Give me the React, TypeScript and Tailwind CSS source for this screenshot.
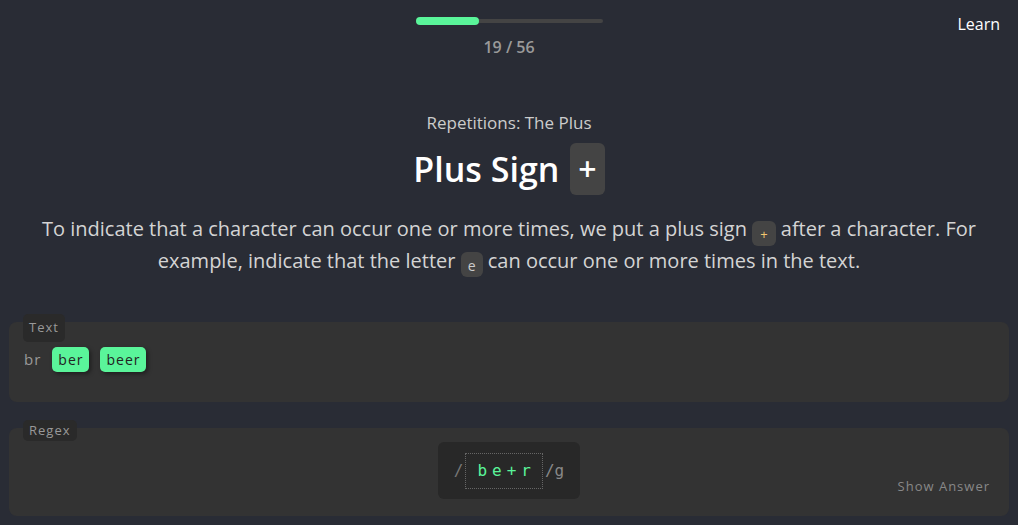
export default function App() {
  return (
    <div className="min-h-[525px] w-full bg-[#292c35] font-['Open_Sans',sans-serif] text-[#ddd]">
      {/* Header */}
      <div className="relative flex h-[70px] flex-col items-center pt-[19px]">
        <div className="h-[4px] w-[187px] rounded-full bg-[#444]">
          <div className="h-[8px] w-[63px] -translate-y-[2px] rounded-full bg-[#5af59a]" />
        </div>
        <div className="mt-[12px] text-[16px] font-semibold text-[#9a9a9a]">19 / 56</div>
        <div className="absolute right-[18px] top-[12px] text-[16px] text-white">Learn</div>
      </div>

      {/* Intro */}
      <div className="flex flex-col items-center pt-[41px] text-center">
        <div className="text-[17px] leading-[24px] text-[#ccc]">Repetitions: The Plus</div>
        <h1 className="mt-[8px] flex items-center gap-[11px] text-[34px] font-semibold leading-[52px] text-white">
          Plus Sign
          <span className="rounded-[6px] bg-[#444] px-[8px] text-[32px]">+</span>
        </h1>
        <p className="mt-[19px] max-w-[960px] px-[10px] text-[20px] leading-[30px] text-[#d4d4d4]">
          To indicate that a character can occur one or more times, we put a plus sign{" "}
          <code className="inline-block h-[25px] rounded-[6px] bg-[#444] px-[8px] align-[-3px] font-['Open_Sans',sans-serif] text-[13px] leading-[27px] text-[#f5c770]">+</code>{" "}
          after a character. For example, indicate that the letter{" "}
          <code className="inline-block h-[25px] rounded-[6px] bg-[#444] px-[7px] align-[-3px] font-['Open_Sans',sans-serif] text-[14px] leading-[28px] text-[#ccc]">e</code>{" "}
          can occur one or more times in the text.
        </p>
      </div>

      {/* Text panel */}
      <div className="mx-[9px] mt-[45px] rounded-[8px] bg-[#333]">
        <div className="relative h-[80px] px-[14px] pt-[25px]">
          <span className="absolute left-[14px] top-[-8px] flex h-[28px] items-center rounded-[5px] bg-[#2a2a2a] px-[6px] text-[13px] tracking-[1px] text-[#999]">
            Text
          </span>
          <div className="flex items-center gap-[11px] text-[14px] tracking-[1px]">
            <span className="pl-[1px] text-[15px] text-[#999]">br</span>
            <span className="rounded-[5px] bg-[#5af59a] px-[6px] py-[2px] text-[#222] shadow-[2px_2px_4px_rgba(0,0,0,0.4)]">ber</span>
            <span className="rounded-[5px] bg-[#5af59a] px-[6px] py-[2px] text-[#222] shadow-[2px_2px_4px_rgba(0,0,0,0.4)]">beer</span>
          </div>
        </div>
      </div>

      {/* Regex panel */}
      <div className="mx-[9px] mt-[26px] rounded-[8px] bg-[#333]">
        <div className="relative flex h-[88px] justify-center pt-[14px]">
          <span className="absolute left-[14px] top-[-8px] flex h-[21px] items-center rounded-[5px] bg-[#2a2a2a] px-[6px] text-[13px] tracking-[1px] text-[#999]">
            Regex
          </span>
          <div className="flex h-[57px] w-[142px] items-center justify-center gap-[2px] rounded-[6px] bg-[#282828] font-['DejaVu_Sans_Mono',monospace] text-[16px]">
            <span className="text-[#777]">/</span>
            <span className="border border-dotted border-[#666] py-[5px] pl-[11px] pr-[6px] tracking-[5px] text-[#5af59a]">be+r</span>
            <span className="text-[#888]">/g</span>
          </div>
          <span className="absolute bottom-[20px] right-[19px] text-[13px] tracking-[1px] text-[#888]">Show Answer</span>
        </div>
      </div>
    </div>
  );
}
